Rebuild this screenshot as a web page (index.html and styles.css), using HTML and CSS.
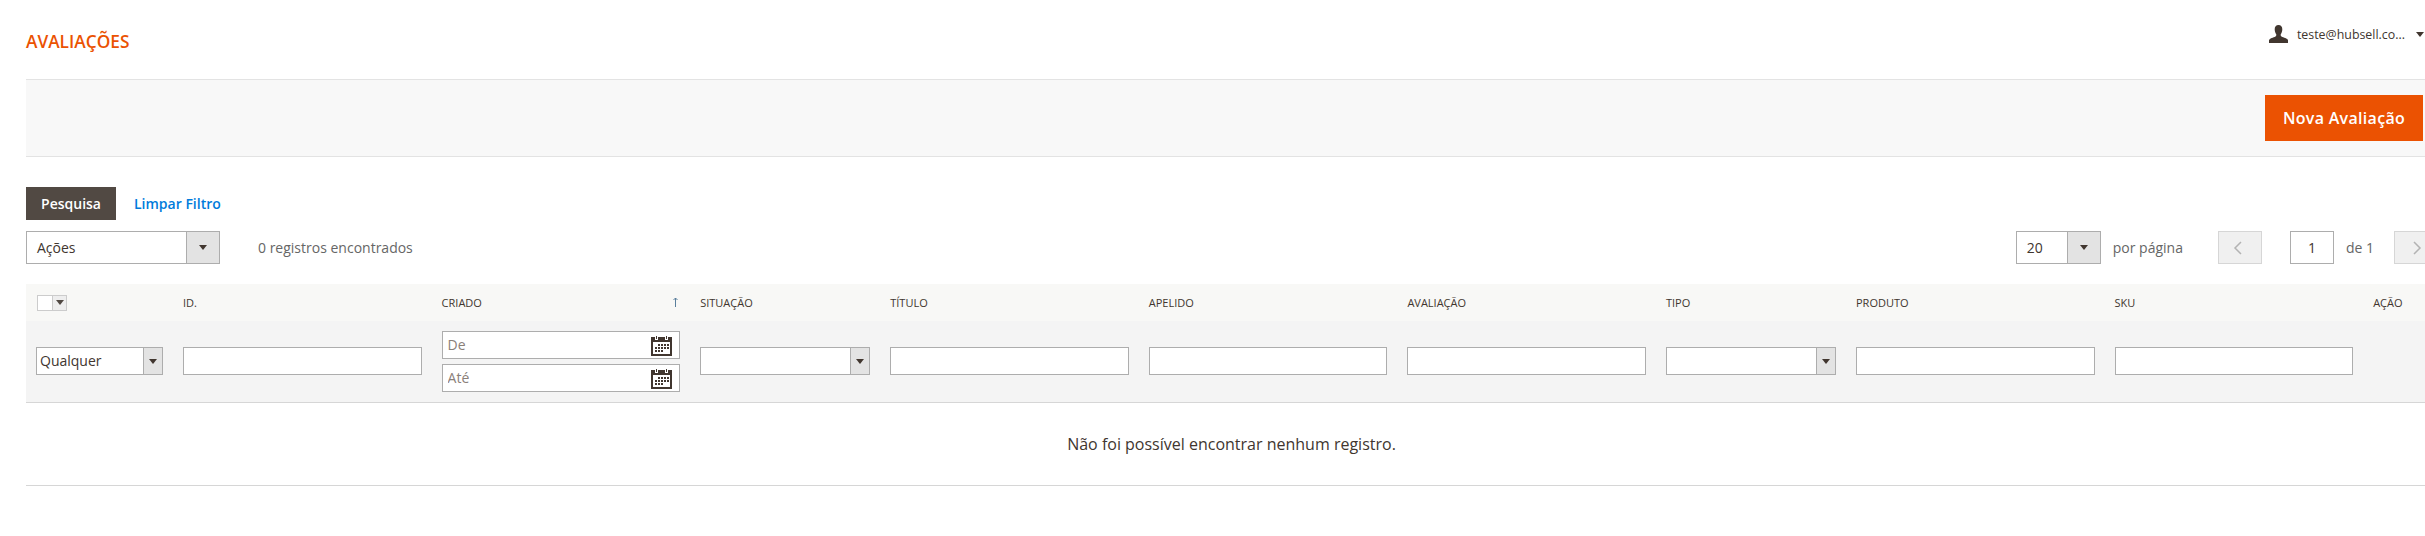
FILE: index.html
```html
<!DOCTYPE html>
<html lang="pt-BR">
<head>
	<meta charset="UTF-8">
	<title>Avaliações</title>
	<link rel="stylesheet" href="styles.css">
</head>
<body>
	<header class="page-header">
		<h1 class="page-title">AVALIAÇÕES</h1>
		<div class="user-menu">
			<svg class="user-icon" viewBox="0 0 19 18" width="19" height="18"><path d="M9.5 0C12 0 13.3 1.800 13.300 4.300C13.300 6.300 12.600 8 11.800 9.200C11.500 9.900 11.700 10.900 12.500 11.400C14.500 12.500 18.500 13.200 19 15.300V18H0V15.300C.5 13.200 4.500 12.500 6.500 11.400C7.300 10.900 7.500 9.900 7.200 9.200C6.400 8 5.700 6.300 5.700 4.300C5.700 1.800 7 0 9.500 0Z"/></svg>
			<span class="user-name">teste@hubsell.co...</span>
			<span class="caret user-caret"></span>
		</div>
	</header>

	<div class="toolbar">
		<button class="btn-primary">Nova Avaliação</button>
	</div>

	<main class="grid-wrap">
		<div class="grid-buttons">
			<button class="btn-search">Pesquisa</button>
			<a class="link-reset" href="#">Limpar Filtro</a>
		</div>

		<div class="grid-pager">
			<div class="select select-actions">
				<span class="select-text">Ações</span>
				<span class="select-arrow"><span class="caret"></span></span>
			</div>
			<span class="records">0 registros encontrados</span>
			<div class="pager">
				<div class="select select-perpage">
					<span class="select-text">20</span>
					<span class="select-arrow"><span class="caret"></span></span>
				</div>
				<span class="pager-label">por página</span>
				<button class="pager-btn pager-prev">
					<svg viewBox="0 0 9 14" width="9" height="14"><path d="M8 1L2 7l6 6" /></svg>
				</button>
				<input class="pager-input" type="text" value="1">
				<span class="pager-total">de 1</span>
				<button class="pager-btn pager-next">
					<svg viewBox="0 0 9 14" width="9" height="14"><path d="M1 1l6 6-6 6" /></svg>
				</button>
			</div>
		</div>

		<table class="grid">
			<colgroup>
				<col class="col-check"><col class="col-wide"><col class="col-wide">
				<col class="col-narrow"><col class="col-wide"><col class="col-wide"><col class="col-wide">
				<col class="col-narrow"><col class="col-wide"><col class="col-wide"><col class="col-action">
			</colgroup>
			<thead>
				<tr class="head-row">
					<th>
						<div class="mass-select"><span class="mass-box"></span><span class="mass-arrow"><span class="caret caret-small"></span></span></div>
					</th>
					<th>ID.</th>
					<th class="sorted">CRIADO<svg class="sort-arrow" viewBox="0 0 5 10" width="5" height="10"><path d="M2.500 10V1M.5 3l2-2 2 2"/></svg></th>
					<th>SITUAÇÃO</th>
					<th>TÍTULO</th>
					<th>APELIDO</th>
					<th>AVALIAÇÃO</th>
					<th>TIPO</th>
					<th>PRODUTO</th>
					<th>SKU</th>
					<th>AÇÃO</th>
				</tr>
				<tr class="filter-row">
					<td>
						<div class="select select-filter">
							<span class="select-text">Qualquer</span>
							<span class="select-arrow"><span class="caret"></span></span>
						</div>
					</td>
					<td><input class="field" type="text"></td>
					<td>
						<div class="date-field">
							<input class="field" type="text" placeholder="De">
							<svg class="cal-icon" viewBox="0 0 21 21" width="21" height="21"><use href="#cal"/></svg>
						</div>
						<div class="date-field">
							<input class="field" type="text" placeholder="Até">
							<svg class="cal-icon" viewBox="0 0 21 21" width="21" height="21"><use href="#cal"/></svg>
						</div>
					</td>
					<td>
						<div class="select select-filter">
							<span class="select-text"></span>
							<span class="select-arrow"><span class="caret"></span></span>
						</div>
					</td>
					<td><input class="field" type="text"></td>
					<td><input class="field" type="text"></td>
					<td><input class="field" type="text"></td>
					<td>
						<div class="select select-filter">
							<span class="select-text"></span>
							<span class="select-arrow"><span class="caret"></span></span>
						</div>
					</td>
					<td><input class="field" type="text"></td>
					<td><input class="field" type="text"></td>
					<td></td>
				</tr>
			</thead>
			<tbody>
				<tr class="empty-row">
					<td colspan="11">Não foi possível encontrar nenhum registro.</td>
				</tr>
			</tbody>
		</table>
	</main>

	<svg class="sprite" width="0" height="0">
		<symbol id="cal" viewBox="0 0 21 21">
			<path fill="#41362f" d="M0 2h21v19H0z"/>
			<path fill="#fff" d="M2 7h17v12H2z"/>
			<path fill="#fff" d="M4 0h3v5H4zM14 0h3v5h-3z"/>
			<path fill="#41362f" d="M5 1h1v3H5zM15 1h1v3h-1z"/>
			<path fill="#41362f" d="M7 9h2v2H7zM10 9h2v2h-2zM13 9h2v2h-2zM16 9h2v2h-2zM4 12h2v2H4zM7 12h2v2H7zM10 12h2v2h-2zM13 12h2v2h-2zM16 12h2v2h-2zM4 15h2v2H4zM7 15h2v2H7zM10 15h2v2h-2z"/>
		</symbol>
	</svg>
</body>
</html>
```

FILE: styles.css
```css
* {
	box-sizing: border-box;
	margin: 0;
	padding: 0;
}
body {
	font-family: "Open Sans", "Noto Sans", sans-serif;
	font-size: 14px;
	color: #41362f;
	background: #fff;
	overflow: hidden;
}
button {
	font-family: inherit;
	border: 0;
}

.page-header {
	height: 79px;
	padding: 0 1px 0 26px;
	display: flex;
	justify-content: space-between;
	align-items: flex-start;
}
.page-title {
	font-size: 17.3px;
	font-weight: 600;
	line-height: 24px;
	margin-top: 30px;
	color: #eb5202;
}
.user-menu {
	display: flex;
	align-items: center;
	margin-top: 25px;
	height: 18px;
}
.user-icon {
	fill: #41362f;
}
.user-name {
	margin-left: 9px;
	font-size: 12.4px;
	color: #41362f;
}
.user-caret {
	margin-left: 11px;
}

.caret {
	display: block;
	width: 0;
	height: 0;
	border-left: 4px solid transparent;
	border-right: 4px solid transparent;
	border-top: 5px solid #41362f;
}
.caret-small {
	border-top-color: #514943;
}

.toolbar {
	height: 78px;
	margin-left: 26px;
	padding: 15px 2px 0 0;
	display: flex;
	justify-content: flex-end;
	background: #f8f8f8;
	border-top: 1px solid #e3e3e3;
	border-bottom: 1px solid #e3e3e3;
}
.btn-primary {
	width: 158px;
	height: 46px;
	font-size: 16px;
	font-weight: 600;
	letter-spacing: .3px;
	color: #fff;
	background: #eb5202;
}

.grid-wrap {
	padding-left: 26px;
}
.grid-buttons {
	margin-top: 30px;
	display: flex;
	align-items: center;
}
.btn-search {
	width: 90px;
	height: 33px;
	font-size: 14px;
	font-weight: 600;
	color: #fff;
	background: #514943;
}
.link-reset {
	margin-left: 18px;
	font-size: 14px;
	font-weight: 600;
	color: #007bdb;
	text-decoration: none;
}

.grid-pager {
	margin-top: 11px;
	height: 33px;
	display: flex;
	align-items: center;
}
.select {
	display: flex;
	background: #fff;
	border: 1px solid #adadad;
}
.select-text {
	flex: 1;
	min-width: 0;
	padding-left: 10px;
	white-space: nowrap;
}
.select-arrow {
	flex: none;
	display: flex;
	align-items: center;
	justify-content: center;
	background: #e3e3e3;
	border-left: 1px solid #adadad;
}
.select-actions {
	width: 194px;
	height: 33px;
	line-height: 31px;
}
.select-actions .select-arrow {
	width: 33px;
}
.records {
	margin-left: 38px;
	color: #666;
}
.pager {
	margin-left: auto;
	display: flex;
	align-items: center;
}
.select-perpage {
	width: 85px;
	height: 33px;
	line-height: 31px;
}
.select-perpage .select-arrow {
	width: 33px;
}
.pager-label {
	margin-left: 12px;
	color: #666;
}
.pager-btn {
	width: 44px;
	height: 33px;
	display: flex;
	align-items: center;
	justify-content: center;
	background: #f0f0f0;
	border: 1px solid #d6d6d6;
}
.pager-btn svg {
	fill: none;
	stroke: #b3b3b3;
	stroke-width: 1.5;
}
.pager-prev {
	margin-left: 35px;
	padding-right: 4px;
}
.pager-input {
	width: 44px;
	height: 33px;
	margin-left: 28px;
	font: inherit;
	color: #41362f;
	text-align: center;
	border: 1px solid #adadad;
}
.pager-total {
	margin-left: 12px;
	color: #666;
}
.pager-next {
	width: 31px;
	margin-left: 20px;
	border-right: 0;
	padding-left: 18px;
	justify-content: flex-start;
}

.grid {
	margin-top: 20px;
	width: 2399px;
	table-layout: fixed;
	border-collapse: collapse;
}
.col-check { width: 147px; }
.col-wide { width: 258.6px; }
.col-narrow { width: 190px; }
.col-action { width: 61.8px; }

.head-row {
	height: 37px;
	background: #f8f8f6;
}
.head-row th {
	padding: 0 10px;
	font-size: 11px;
	font-weight: 400;
	text-align: left;
	color: #41362f;
	white-space: nowrap;
}
.sorted {
	position: relative;
}
.sort-arrow {
	position: absolute;
	top: 13px;
	right: 12px;
	fill: none;
	stroke: #5a7f9c;
	stroke-width: 1;
}
.mass-select {
	display: flex;
	width: 30px;
	height: 16px;
	margin-left: 1px;
	border: 1px solid #cccccc;
}
.mass-box {
	width: 15px;
	background: #fff;
	border-right: 1px solid #cccccc;
}
.mass-arrow {
	flex: 1;
	display: flex;
	align-items: center;
	justify-content: center;
	background: #eeeeee;
}

.filter-row {
	height: 81px;
	background: #f4f4f4;
	border-bottom: 1px solid #d6d6d6;
}
.filter-row td {
	padding: 0 10px;
	vertical-align: middle;
}
.field {
	display: block;
	width: 100%;
	height: 28px;
	padding: 0 5px;
	font: inherit;
	color: #41362f;
	background: #fff;
	border: 1px solid #adadad;
}
.field::placeholder {
	color: #8a8079;
	opacity: 1;
}
.select-filter {
	height: 28px;
	line-height: 26px;
}
.select-filter .select-text {
	padding-left: 3px;
}
.select-filter .select-arrow {
	width: 19px;
}
.date-field {
	position: relative;
}
.date-field + .date-field {
	margin-top: 5px;
}
.cal-icon {
	position: absolute;
	top: 4px;
	right: 8px;
}

.empty-row {
	height: 83px;
	border-bottom: 1px solid #d6d6d6;
}
.empty-row td {
	padding-left: 12px;
	font-size: 16px;
	text-align: center;
	color: #41362f;
}
.sprite {
	position: absolute;
}
```
